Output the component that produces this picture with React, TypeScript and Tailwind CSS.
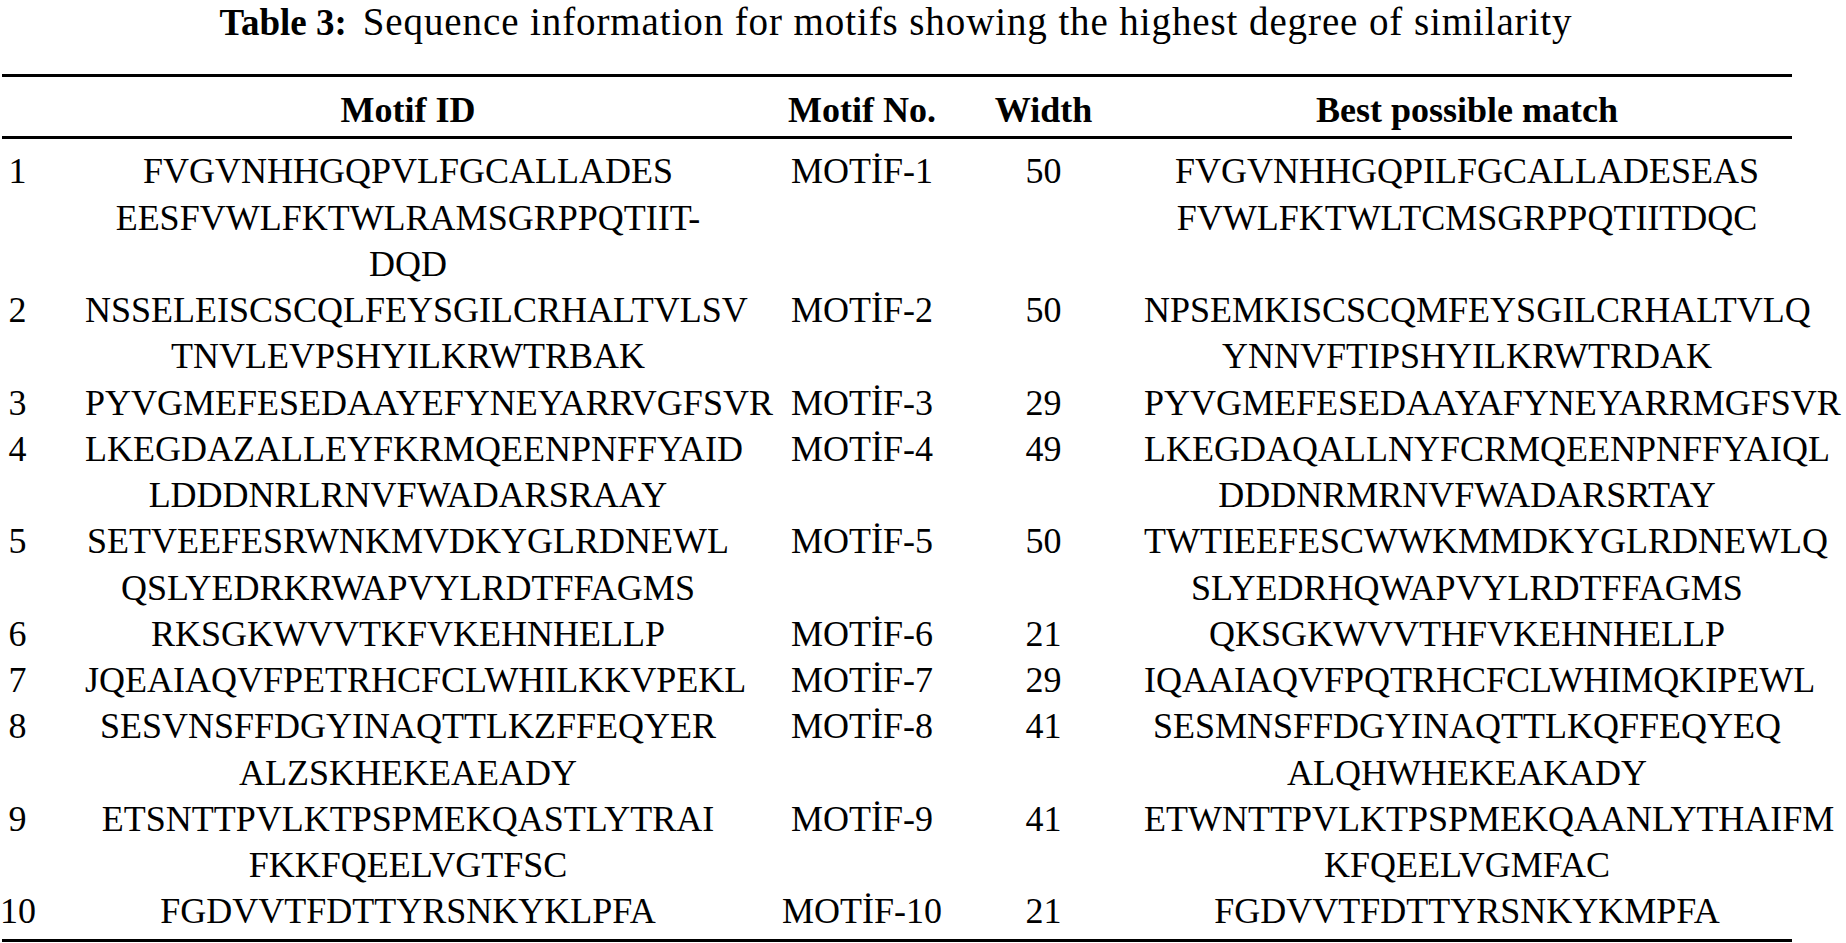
type Row = {
  no: string;
  id: string[];
  motif: string;
  width: string;
  match: string[];
};

const ROWS: Row[] = [
  {
    no: "1",
    id: ["FVGVNHHGQPVLFGCALLADES", "EESFVWLFKTWLRAMSGRPPQTIIT-", "DQD"],
    motif: "MOTİF-1",
    width: "50",
    match: ["FVGVNHHGQPILFGCALLADESEAS", "FVWLFKTWLTCMSGRPPQTIITDQC"],
  },
  {
    no: "2",
    id: ["NSSELEISCSCQLFEYSGILCRHALTVLSV", "TNVLEVPSHYILKRWTRBAK"],
    motif: "MOTİF-2",
    width: "50",
    match: ["NPSEMKISCSCQMFEYSGILCRHALTVLQ", "YNNVFTIPSHYILKRWTRDAK"],
  },
  {
    no: "3",
    id: ["PYVGMEFESEDAAYEFYNEYARRVGFSVR"],
    motif: "MOTİF-3",
    width: "29",
    match: ["PYVGMEFESEDAAYAFYNEYARRMGFSVR"],
  },
  {
    no: "4",
    id: ["LKEGDAZALLEYFKRMQEENPNFFYAID", "LDDDNRLRNVFWADARSRAAY"],
    motif: "MOTİF-4",
    width: "49",
    match: ["LKEGDAQALLNYFCRMQEENPNFFYAIQL", "DDDNRMRNVFWADARSRTAY"],
  },
  {
    no: "5",
    id: ["SETVEEFESRWNKMVDKYGLRDNEWL", "QSLYEDRKRWAPVYLRDTFFAGMS"],
    motif: "MOTİF-5",
    width: "50",
    match: ["TWTIEEFESCWWKMMDKYGLRDNEWLQ", "SLYEDRHQWAPVYLRDTFFAGMS"],
  },
  {
    no: "6",
    id: ["RKSGKWVVTKFVKEHNHELLP"],
    motif: "MOTİF-6",
    width: "21",
    match: ["QKSGKWVVTHFVKEHNHELLP"],
  },
  {
    no: "7",
    id: ["JQEAIAQVFPETRHCFCLWHILKKVPEKL"],
    motif: "MOTİF-7",
    width: "29",
    match: ["IQAAIAQVFPQTRHCFCLWHIMQKIPEWL"],
  },
  {
    no: "8",
    id: ["SESVNSFFDGYINAQTTLKZFFEQYER", "ALZSKHEKEAEADY"],
    motif: "MOTİF-8",
    width: "41",
    match: ["SESMNSFFDGYINAQTTLKQFFEQYEQ", "ALQHWHEKEAKADY"],
  },
  {
    no: "9",
    id: ["ETSNTTPVLKTPSPMEKQASTLYTRAI", "FKKFQEELVGTFSC"],
    motif: "MOTİF-9",
    width: "41",
    match: ["ETWNTTPVLKTPSPMEKQAANLYTHAIFM", "KFQEELVGMFAC"],
  },
  {
    no: "10",
    id: ["FGDVVTFDTTYRSNKYKLPFA"],
    motif: "MOTİF-10",
    width: "21",
    match: ["FGDVVTFDTTYRSNKYKMPFA"],
  },
];

function Lines({ lines }: { lines: string[] }) {
  return (
    <div className="text-center whitespace-nowrap">
      {lines.map((line) => (
        <div key={line}>{line}</div>
      ))}
    </div>
  );
}

export default function App() {
  return (
    <div className="min-h-screen bg-white text-black font-['Liberation_Serif','Times_New_Roman',serif]">
      <div className="w-[1792px]">
        <h1 className="text-center text-[39px] leading-[44px] font-normal tracking-[0.9px]">
          <span className="text-[37px] font-bold tracking-normal">Table 3:</span>
          <span className="ml-[16px]">
            Sequence information for motifs showing the highest degree of similarity
          </span>
        </h1>

        <div className="mt-[29px] ml-[2px] h-[3px] bg-black" />

        <div className="grid grid-cols-[35px_646px_162px_101px_646px] gap-x-[50px] pt-[10px] pb-[2.5px] text-[36px] leading-[46.25px] font-bold">
          <div />
          <div className="text-center whitespace-nowrap">Motif ID</div>
          <div className="text-center whitespace-nowrap">Motif No.</div>
          <div className="text-center whitespace-nowrap">Width</div>
          <div className="text-center whitespace-nowrap">Best possible match</div>
        </div>

        <div className="ml-[2px] h-[3px] bg-black" />

        <div className="pt-[9.7px] pb-[4px] text-[36px] leading-[46.25px]">
          {ROWS.map((row) => (
            <div
              key={row.no}
              className="grid grid-cols-[35px_646px_162px_101px_646px] gap-x-[50px]"
            >
              <div className="text-center whitespace-nowrap">{row.no}</div>
              <Lines lines={row.id} />
              <div className="text-center whitespace-nowrap">{row.motif}</div>
              <div className="text-center">{row.width}</div>
              <Lines lines={row.match} />
            </div>
          ))}
        </div>

        <div className="ml-[2px] h-[3px] bg-black" />
      </div>
    </div>
  );
}
